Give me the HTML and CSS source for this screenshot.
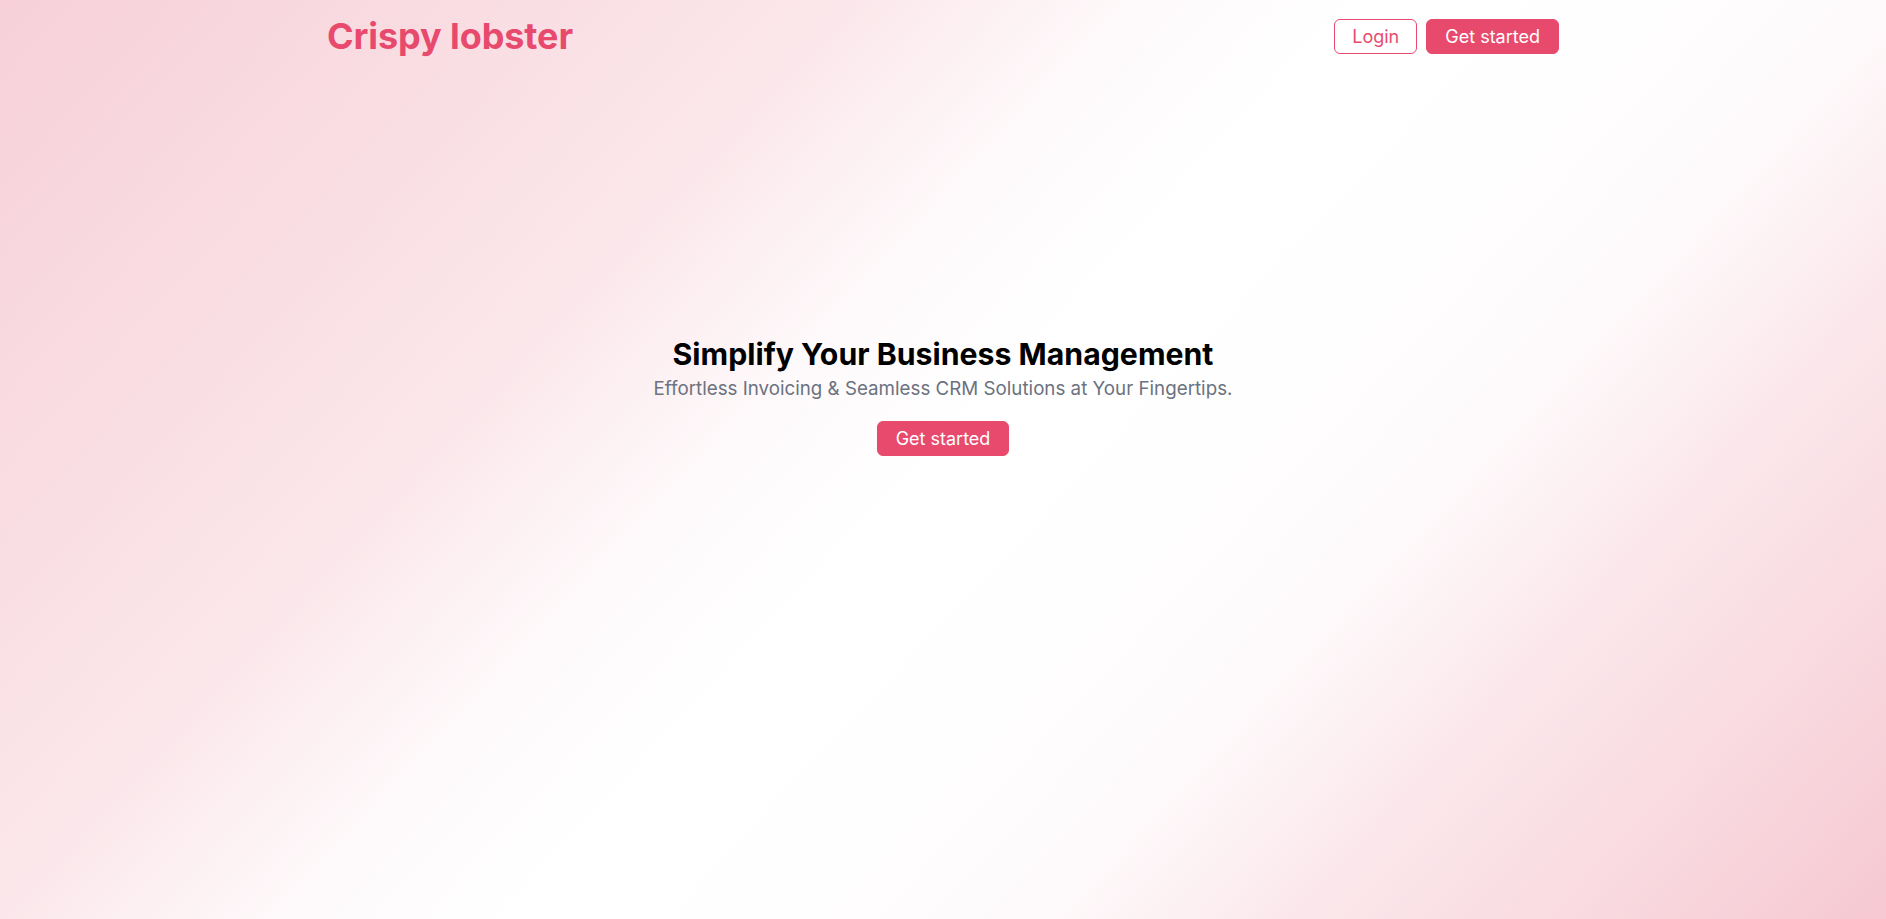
FILE: index.html
```html
<!DOCTYPE html>
<html lang="en">
<head>
<meta charset="utf-8">
<title>Crispy lobster</title>
<link rel="stylesheet" href="styles.css">
</head>
<body>
<div class="page">
  <header class="header">
    <div class="container header-row">
      <a class="logo" href="#">Crispy lobster</a>
      <nav class="nav">
        <a class="btn btn-outline" href="#">Login</a>
        <a class="btn btn-solid" href="#">Get started</a>
      </nav>
    </div>
  </header>
  <main class="hero">
    <h1 class="hero-title">Simplify Your Business Management</h1>
    <p class="hero-sub">Effortless Invoicing &amp; Seamless CRM Solutions at Your Fingertips.</p>
    <a class="btn btn-solid btn-hero" href="#">Get started</a>
  </main>
</div>
</body>
</html>
```

FILE: styles.css
```css
* { box-sizing: border-box; }
html, body { margin: 0; padding: 0; height: 100%; }
body {
  font-family: Inter, "Noto Sans", "Liberation Sans", sans-serif;
  color: #000;
}
.page {
  min-height: 100vh;
  background: linear-gradient(133deg,
    #f7d0d9 0%,
    #f9dce2 16%,
    #fbe7eb 31%,
    #fefafb 42%,
    #ffffff 50%,
    #fffefe 60%,
    #fefafb 69%,
    #fbe8ec 78%,
    #f9dbe1 88%,
    #f6c8d2 100%);
}
.container {
  max-width: 1280px;
  margin: 0 auto;
  padding: 0 24px;
}
.header { padding: 16px 0 16px; }
.header-row {
  display: flex;
  align-items: center;
  justify-content: space-between;
}
.logo {
  font-size: 36px;
  line-height: 40px;
  font-weight: 700;
  color: #e84a6e;
  text-decoration: none;
  letter-spacing: -0.1px;
}
.nav { display: flex; gap: 9px; align-items: center; }
.btn {
  display: inline-block;
  text-decoration: none;
  font-size: 18px;
  line-height: 27px;
  padding: 3px 17px;
  border-radius: 6px;
  border: 1px solid #e84a6e;
}
.btn-outline { background: #fff; color: #e84a6e; }
.btn-solid { background: #e84a6e; color: #fff; padding: 3px 18px; }
.hero {
  display: flex;
  flex-direction: column;
  align-items: center;
  text-align: center;
  padding-top: 264px;
}
.hero-title {
  margin: 0;
  font-size: 30.25px;
  line-height: 36px;
  font-weight: 700;
}
.hero-sub {
  margin: 3px 0 0;
  font-size: 18.75px;
  line-height: 28px;
  color: #6b7280;
}
.btn-hero {
  margin-top: 18px;
}
```
